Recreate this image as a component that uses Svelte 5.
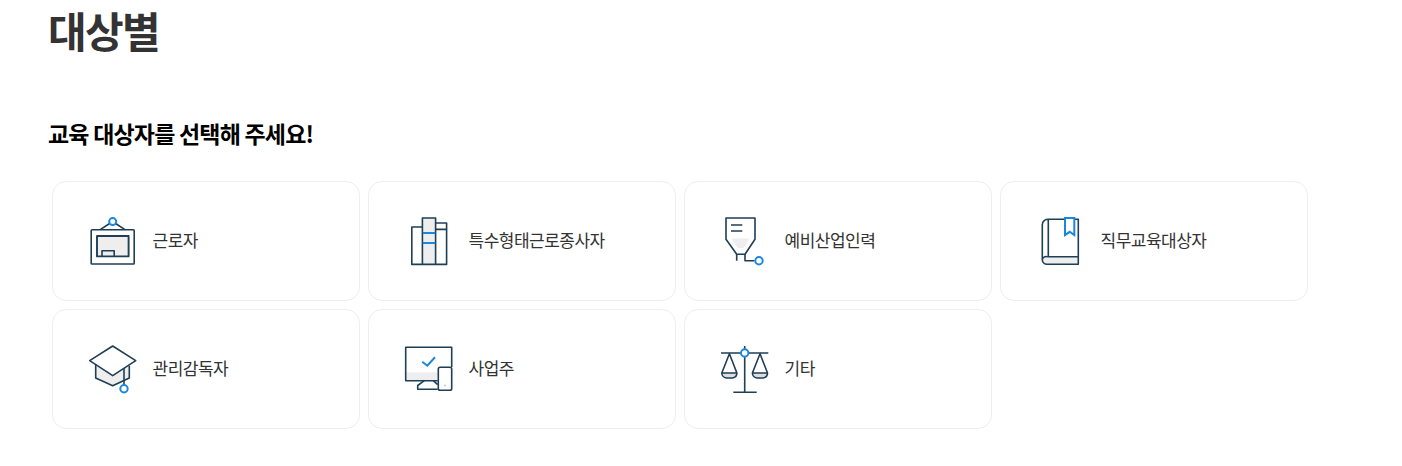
<script lang="ts">
  const row1 = [
    { id: 'worker', label: '근로자' },
    { id: 'special', label: '특수형태근로종사자' },
    { id: 'future', label: '예비산업인력' },
    { id: 'job', label: '직무교육대상자' }
  ];
  const row2 = [
    { id: 'manager', label: '관리감독자' },
    { id: 'owner', label: '사업주' },
    { id: 'etc', label: '기타' }
  ];
  const targets = [...row1, ...row2];
</script>

<main class="page">
  <h1 class="title">대상별</h1>
  <h2 class="subtitle">교육 대상자를 선택해 주세요!</h2>

  <ul class="target-list">
    {#each targets as target}
      <li class="target-card">
        <svg class="icon" viewBox="0 0 50 50" width="50" height="50" fill="none" aria-hidden="true">
          {#if target.id === 'worker'}
            <rect x="9" y="19.5" width="31.5" height="20" fill="#eee" />
            <rect x="3.2" y="12.7" width="43" height="34.3" rx="0.8" class="line" />
            <rect x="9" y="19" width="31.6" height="20.4" class="line thick" />
            <path d="M14 39.4v-5.6h12.2v5.6" class="line" />
            <path d="M12.2 12.7l9.4-6.2M37 12.7l-9.4-6.2" class="line" />
            <circle cx="24.7" cy="4.6" r="3.5" class="dot" />
          {:else if target.id === 'special'}
            <rect x="18.4" y="1" width="13.2" height="46.4" fill="#eee" />
            <path d="M7.8 10h10.6v37.4H7.8zM18.4 1h13.2v46.4H18.4zM31.6 6h11v41.4h-11zM31.6 12.4h11" class="line" />
            <path d="M18.8 16h12.4M18.8 26h12.4" class="blue" />
          {:else if target.id === 'future'}
            <path d="M11.5 21.5h18l-6 9.5h-6z" fill="#eee" />
            <path d="M6 1h29v21.3L25 37.3h-8.3L6 22.3z" class="line" />
            <path d="M11 8h11.3M11 14h11.3" class="line" />
            <path d="M16.7 37.3v6.4M25 37.3v6.4h9.4" class="line" />
            <circle cx="39" cy="43.7" r="3.7" class="dot" />
          {:else if target.id === 'job'}
            <path d="M7 40h35.3v7.3H11.7a4.6 4.6 0 0 1-4.6-3.7z" fill="#eee" />
            <path d="M42.3 2.3H11.7A5.4 5.4 0 0 0 6.3 7.7v34.8a4.8 4.8 0 0 0 4.8 4.8h31.2zM12.3 2.3v37.4M11.2 39.7h31.1M11.2 39.7a3.8 3.8 0 0 0-4.9 3" class="line" />
            <path d="M29 1h9.3v17l-4.6-3.2L29 18z" class="blue" fill="#fff" />
          {:else if target.id === 'manager'}
            <path d="M7.7 20v13l17 7.7 16.6-7.7V20l-16.6 10.7z" fill="#eee" />
            <path d="M24.7 1l23 14.7-23 15-23-15z" class="line" />
            <path d="M7.7 19.7V33l17 7.7 16.6-7.7V20.7" class="line" />
            <path d="M36 23v17" class="line" />
            <circle cx="36" cy="43.7" r="3.7" class="dot" />
          {:else if target.id === 'owner'}
            <rect x="2.3" y="27.3" width="31" height="8.4" fill="#eee" />
            <path d="M33.7 35.7H1.7V2.3h46v19.7" class="line" />
            <path d="M20.3 35.7l-6.6 4.8v3.7h20M29.3 35.7l4.4 4" class="line" />
            <rect x="34.3" y="22.3" width="13.4" height="23" rx="1.8" class="line" fill="#fff" />
            <circle cx="41" cy="40.4" r="0.9" fill="#b8c2ca" />
            <path d="M18.3 16.7l5 4 7.7-8.4" class="blue" />
          {:else}
            <path d="M2.2 28h15a5 5 0 0 1-4 5H6.2a5 5 0 0 1-4-5zM32.5 28h15a5 5 0 0 1-4 5h-7a5 5 0 0 1-4-5z" fill="#ddd" />
            <path d="M1 8h47.3M24.7 1v46.3M13.3 47.3h23.4" class="line" />
            <path d="M9.4 8.7L1.8 28h15.1zM1.8 28a5 5 0 0 0 4.4 5h6.4a5 5 0 0 0 4.3-5zM40 8.7L32.4 28h15.1zM32.4 28a5 5 0 0 0 4.4 5h6.4a5 5 0 0 0 4.3-5z" class="line" />
            <circle cx="24.7" cy="8" r="3.7" class="dot" />
          {/if}
        </svg>
        <span class="label">{target.label}</span>
      </li>
    {/each}
  </ul>
</main>

<style>
  :global(body) {
    margin: 0;
    background: #fff;
    font-family: 'Noto Sans CJK KR', 'Noto Sans', sans-serif;
  }
  .page {
    padding: 0 48px;
  }
  .title {
    margin: 0;
    font-size: 42px;
    line-height: 60px;
    font-weight: 700;
    letter-spacing: -1.6px;
    color: #333;
  }
  .subtitle {
    margin: 55px 0 0;
    font-size: 23px;
    line-height: 36px;
    font-weight: 700;
    letter-spacing: -0.8px;
    color: #000;
  }
  .target-list {
    list-style: none;
    margin: 30px 0 0;
    padding: 0 4px;
    display: grid;
    grid-template-columns: repeat(4, 308px);
    gap: 8px;
  }
  .target-card {
    box-sizing: border-box;
    height: 120px;
    display: flex;
    align-items: center;
    gap: 15px;
    padding-left: 34.5px;
    border: 1px solid #eee;
    border-radius: 14px;
    background: #fff;
  }
  .icon {
    flex: none;
    margin-top: 2px;
    overflow: visible;
  }
  .label {
    margin-top: -2px;
    font-size: 17px;
    line-height: 24px;
    letter-spacing: -0.5px;
    color: #333;
  }
  .line {
    stroke: #1f3f55;
    stroke-width: 1.6;
    stroke-linejoin: round;
  }
  .thick {
    stroke-width: 1.9;
  }
  .blue {
    stroke: #1b87dc;
    stroke-width: 2;
  }
  .dot {
    stroke: #1b87dc;
    stroke-width: 2;
    fill: #fff;
  }
</style>
